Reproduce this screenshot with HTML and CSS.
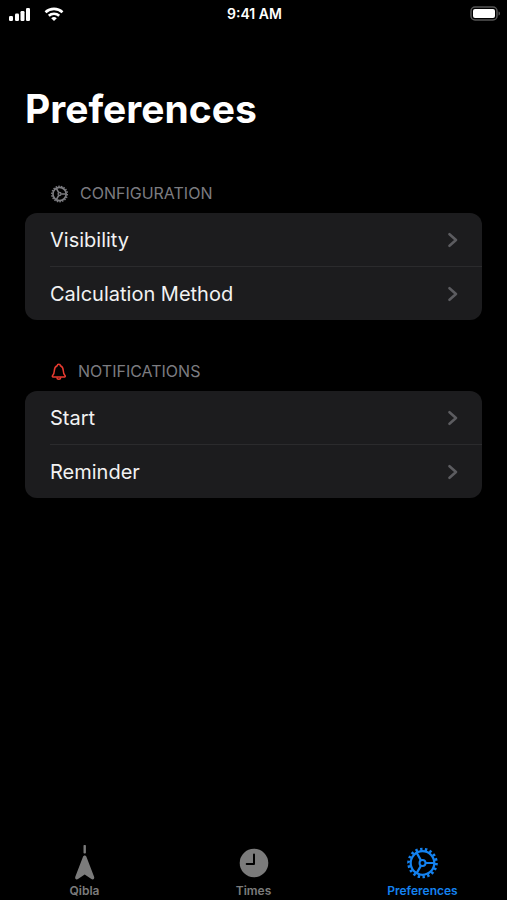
FILE: index.html
```html
<!DOCTYPE html>
<html lang="en">
<head>
    <meta charset="UTF-8">
    <meta name="viewport" content="width=device-width, initial-scale=1.0">
    <title>Preferences</title>
    <link rel="stylesheet" href="styles.css">
</head>
<body>
    <svg class="symbols" aria-hidden="true">
        <symbol id="chevron" viewBox="0 0 10 16">
            <path d="M1.500 2.200 8 8l-6.500 5.800" fill="none" stroke="currentColor" stroke-width="2.500" stroke-linecap="round" stroke-linejoin="round"/>
        </symbol>
    </svg>

    <div class="status-bar">
        <div class="signal">
            <svg width="23" height="14" viewBox="0 0 23 14" fill="#fff" aria-hidden="true">
                <rect x="1" y="9" width="4" height="5" rx="1.200"/>
                <rect x="7" y="6.500" width="4" height="7.500" rx="1.200"/>
                <rect x="12.500" y="4" width="4" height="10" rx="1.200"/>
                <rect x="18" y="1" width="4" height="13" rx="1.200"/>
            </svg>
            <svg width="20" height="14" viewBox="0 0 20 14" fill="none" stroke="#fff" stroke-width="2.600" aria-hidden="true">
                <path d="M1.500 5.300a12.300 12.300 0 0 1 17 0"/>
                <path d="M4.800 8.800a7.600 7.600 0 0 1 10.400 0"/>
                <path d="M10 14 7.200 11.300a4 4 0 0 1 5.600 0z" fill="#fff" stroke="none"/>
            </svg>
        </div>
        <time>9:41 AM</time>
        <div class="battery">
            <svg width="31" height="15" viewBox="0 0 31 15" aria-hidden="true">
                <rect x="1" y="1" width="26" height="13" rx="4" fill="none" stroke="#555" stroke-width="1.500"/>
                <rect x="3" y="3" width="22" height="9" rx="2" fill="#fff"/>
                <path d="M28.500 5.500c2 .6 2 3.400 0 4z" fill="#555"/>
            </svg>
        </div>
    </div>

    <main>
        <h1>Preferences</h1>

        <section>
            <h2>
                <svg width="18" height="18" viewBox="0 0 32 32" fill="none" stroke="currentColor" aria-hidden="true">
                    <circle cx="17" cy="16" r="13.800" stroke-width="2.600" pathLength="36" stroke-dasharray="1.100 .9"/>
                    <circle cx="17" cy="16" r="11.800" stroke-width="3"/>
                    <circle cx="17" cy="16" r="2.600" stroke-width="2.400"/>
                    <path d="M20 16h9M15.500 13.400 11 5.600M15.500 18.600 11 26.400" stroke-width="2.800"/>
                </svg>
                CONFIGURATION
            </h2>
            <div class="card">
                <a href="#visibility"><span>Visibility</span><svg class="chevron"><use href="#chevron"/></svg></a>
                <a href="#method"><span>Calculation Method</span><svg class="chevron"><use href="#chevron"/></svg></a>
            </div>
        </section>

        <section>
            <h2>
                <svg class="bell" width="16" height="18" viewBox="0 0 16 18" fill="none" stroke="currentColor" stroke-width="1.500" stroke-linejoin="round" aria-hidden="true">
                    <path d="M7.200 2.800c0-2 3.200-2 3.200 0 2 .8 2.800 2.700 2.900 5 .1 2.400.5 3.400 1.500 4.500.8.900.5 1.600-.4 1.600H3.200c-.9 0-1.200-.7-.4-1.600 1-1.100 1.400-2.100 1.500-4.500.1-2.300.9-4.200 2.900-5z"/>
                    <path d="M6.800 14.300c.3 2.600 3.700 2.600 4 0"/>
                </svg>
                NOTIFICATIONS
            </h2>
            <div class="card">
                <a href="#start"><span>Start</span><svg class="chevron"><use href="#chevron"/></svg></a>
                <a href="#reminder"><span>Reminder</span><svg class="chevron"><use href="#chevron"/></svg></a>
            </div>
        </section>
    </main>

    <nav>
        <a href="#qibla">
            <svg width="32" height="36" viewBox="0 0 32 36" fill="currentColor" aria-hidden="true">
                <rect x="14.500" y="0" width="2.400" height="8.500" rx=".8"/>
                <path d="M15.700 10.500c.8 0 1.400.5 1.800 1.500l7.600 19.800c.7 2-1 3.400-2.700 2.300L15.700 29.500 9 34.100c-1.700 1.100-3.400-.3-2.700-2.300L13.900 12c.4-1 1-1.500 1.800-1.500z"/>
            </svg>
            Qibla
        </a>
        <a href="#times">
            <svg width="32" height="36" viewBox="0 0 32 36" aria-hidden="true">
                <circle cx="16" cy="18" r="14.300" fill="currentColor"/>
                <path d="M16 9.500V19H8.700" fill="none" stroke="#000" stroke-width="2" stroke-linecap="round" stroke-linejoin="round"/>
            </svg>
            Times
        </a>
        <a href="#preferences" class="active">
            <svg width="32" height="36" viewBox="0 0 32 36" fill="none" stroke="currentColor" aria-hidden="true">
                <circle cx="15.500" cy="18" r="13.800" stroke-width="3" pathLength="36" stroke-dasharray="1 1"/>
                <circle cx="15.500" cy="18" r="11.800" stroke-width="2.200"/>
                <circle cx="15.500" cy="18" r="3" stroke-width="2"/>
                <path d="M18.500 18h9M14 15.400 9.500 7.600M14 20.600 9.500 28.400" stroke-width="2.200"/>
            </svg>
            Preferences
        </a>
    </nav>
</body>
</html>
```

FILE: styles.css
```css
* {
    box-sizing: border-box;
}

body {
    display: flex;
    flex-direction: column;
    min-height: 100vh;
    margin: 0;
    background: #000;
    color: #f2f2f2;
    font-family: Inter, "Liberation Sans", sans-serif;
}

a {
    color: inherit;
    text-decoration: none;
}

.symbols {
    display: none;
}

.status-bar {
    display: grid;
    grid-template-columns: 1fr auto 1fr;
    align-items: center;
    height: 27px;
    padding: 0 6px 0 8px;
    color: #fff;
    font-size: 14px;
    font-weight: 600;
}

.signal {
    display: flex;
    gap: 13px;
}

.battery {
    display: flex;
    justify-content: flex-end;
}

main {
    flex: 1;
    padding: 58px 25px 0;
}

h1 {
    margin: 0 0 47px;
    color: #fff;
    font-size: 39px;
    line-height: 48px;
    font-weight: 700;
}

section {
    margin-bottom: 38px;
}

h2 {
    display: flex;
    align-items: center;
    gap: 12px;
    margin: 0;
    padding: 0 25px 6px;
    color: #7c7c80;
    font-size: 16px;
    line-height: 27px;
    font-weight: 400;
}

.bell {
    color: #e93b30;
}

.card {
    border-radius: 12px;
    background: #1c1c1e;
}

.card a {
    display: flex;
    align-items: center;
    justify-content: space-between;
    height: 53px;
    margin-left: 25px;
    padding-right: 24px;
    font-size: 20px;
}

.card a + a {
    height: 54px;
    border-top: 1px solid #2b2b2d;
}

.chevron {
    width: 10px;
    height: 16px;
    color: #5c5c60;
}

nav {
    display: grid;
    grid-template-columns: repeat(3, 1fr);
    height: 55px;
}

nav a {
    display: flex;
    flex-direction: column;
    align-items: center;
    color: #7b7b7b;
    font-size: 12px;
    line-height: 20px;
    font-weight: 600;
}

nav .active {
    color: #1482f0;
}
```
